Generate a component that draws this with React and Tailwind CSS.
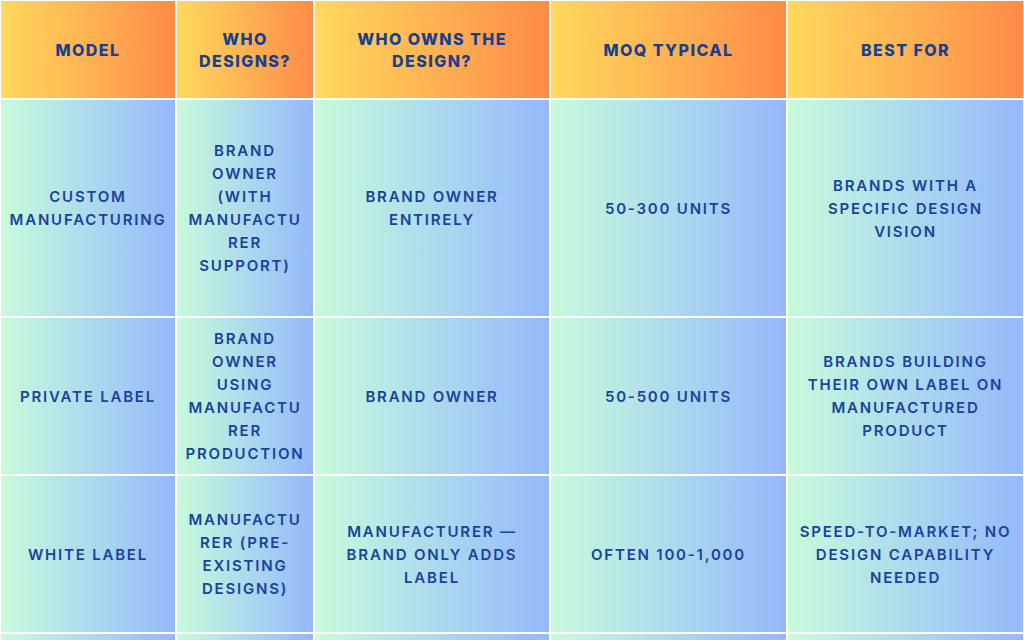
const headers = ['Model', 'Who designs?', 'Who owns the design?', 'MOQ typical', 'Best for'];

const rows = [
  [
    'Custom manufacturing',
    'Brand owner (with manufacturer support)',
    'Brand owner entirely',
    '50-300 units',
    'Brands with a specific design vision',
  ],
  [
    'Private label',
    'Brand owner using manufacturer production',
    'Brand owner',
    '50-500 units',
    'Brands building their own label on manufactured product',
  ],
  [
    'White label',
    'Manufacturer (pre-existing designs)',
    'Manufacturer — brand only adds label',
    'Often 100-1,000',
    'Speed-to-market; no design capability needed',
  ],
  ['', '', '', '', ''],
];

export default function App() {
  return (
    <div className="h-[640px] w-[1024px] overflow-hidden bg-white">
      <div
        className="grid grid-cols-[174px_136px_234px_235px_235px] grid-rows-[97px_216px_156px_156px_60px] gap-[2px] p-[1px]"
        style={{ fontFamily: 'Inter, "Noto Sans", sans-serif' }}
      >
        {headers.map((h) => (
          <div
            key={h}
            className="flex items-center justify-center bg-gradient-to-r from-[#ffd95c] to-[#ff8a48] px-3 text-center text-[16px] leading-[22px] font-extrabold uppercase tracking-[0.09em] text-[#17408e]"
          >
            {h}
          </div>
        ))}
        {rows.map((r, i) =>
          r.map((c, j) => (
            <div
              key={i + '-' + j}
              className="flex items-center justify-center bg-gradient-to-r from-[#c8fbdb] to-[#96b8fa] px-2 text-center text-[15px] leading-[23px] font-semibold uppercase tracking-[0.12em] text-[#17449a] [overflow-wrap:anywhere]"
            >
              {c}
            </div>
          ))
        )}
      </div>
    </div>
  );
}
